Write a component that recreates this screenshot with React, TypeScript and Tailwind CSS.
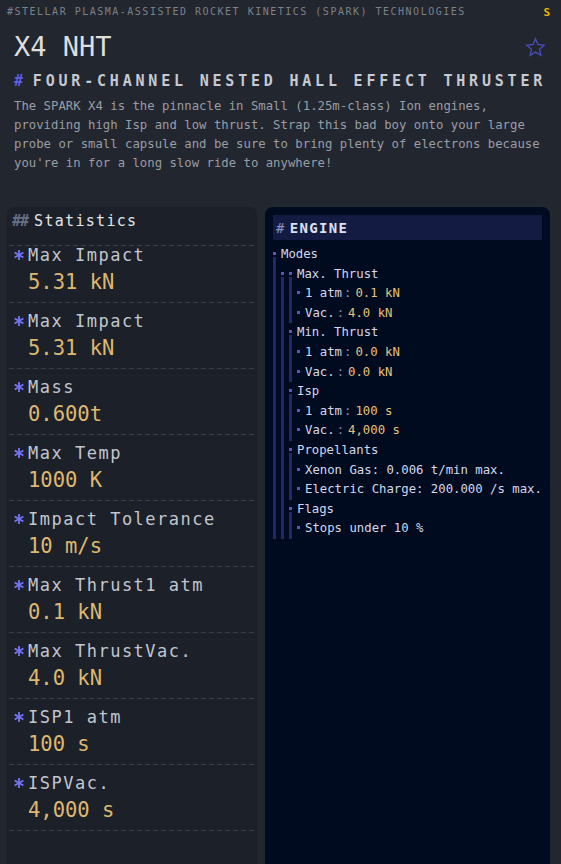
import React from 'react';

interface StatItem {
  label: string;
  value: string;
}

const stats: StatItem[] = [
  { label: 'Max Impact', value: '5.31 kN' },
  { label: 'Max Impact', value: '5.31 kN' },
  { label: 'Mass', value: '0.600t' },
  { label: 'Max Temp', value: '1000 K' },
  { label: 'Impact Tolerance', value: '10 m/s' },
  { label: 'Max Thrust1 atm', value: '0.1 kN' },
  { label: 'Max ThrustVac.', value: '4.0 kN' },
  { label: 'ISP1 atm', value: '100 s' },
  { label: 'ISPVac.', value: '4,000 s' },
];

const Dashes = () => (
  <div className="mx-[2px] h-px bg-[linear-gradient(to_right,#3a3f4a_5px,transparent_5px)] bg-[length:8px_1px]" />
);

const Asterisk = () => (
  <svg width="10" height="10" viewBox="0 0 10 10" className="shrink-0">
    <g stroke="#7373f3" strokeWidth="1.8" strokeLinecap="square">
      <line x1="5" y1="0.8" x2="5" y2="9.2" />
      <line x1="1.4" y1="2.9" x2="8.6" y2="7.1" />
      <line x1="1.4" y1="7.1" x2="8.6" y2="2.9" />
    </g>
  </svg>
);

const Star = () => (
  <svg width="21" height="21" viewBox="0 0 24 24" fill="none">
    <polygon
      points="12,2 14.9,8.6 22,9.3 16.6,14 18.2,21 12,17.3 5.8,21 7.4,14 2,9.3 9.1,8.6"
      stroke="#4b4bb6"
      strokeWidth="1.5"
      strokeLinejoin="miter"
    />
  </svg>
);

interface NodeProps {
  label?: React.ReactNode;
  children?: React.ReactNode;
}

// tree row: bullet + a line down the side of the children
const Node: React.FC<NodeProps> = ({ label, children }) => (
  <div className="flex">
    <div className="flex w-[8px] shrink-0 flex-col">
      <div className="mt-[7px] h-[3px] w-[3px] bg-[#5757c6]" />
      {children && <div className="mt-[2px] w-[3px] flex-1 bg-[#23286a]" />}
    </div>
    <div className="min-w-0 flex-1">
      {label && <div className="whitespace-nowrap leading-[19.6px]">{label}</div>}
      {children}
    </div>
  </div>
);

const Field = ({ k, v }: { k: string; v: string }) => (
  <Node
    label={
      <>
        <span>{k}</span>
        <span className="ml-[2px] mr-[4px] text-[#8a8fb4]">:</span>
        <span className="text-[#e6c27b]">{v}</span>
      </>
    }
  />
);

export default function App() {
  return (
    <div className="flex min-h-screen flex-col bg-[#22262e] font-['DejaVu_Sans_Mono',monospace]">
      <div className="flex h-[19px] items-start justify-between pl-[7px] pr-[11px] pt-[5px]">
        <div className="whitespace-nowrap text-[10px] leading-[14px] tracking-[1.5px] text-[#7d8189]">
          #STELLAR PLASMA-ASSISTED ROCKET KINETICS (SPARK) TECHNOLOGIES
        </div>
        <span className="mt-[2px] text-[11px] font-bold leading-[12px] text-[#f5b301]">S</span>
      </div>

      <div className="pl-[14px] pr-[15px]">
        <div className="mt-[12px] flex items-center justify-between">
          <h1 className="text-[27px] leading-[32px] text-[#dedede]">X4 NHT</h1>
          <Star />
        </div>
        <h2 className="mt-[8px] whitespace-nowrap text-[15px] font-bold leading-[20px] tracking-[3.8px] text-[#c6c9d2]">
          <span className="text-[#5d5de6]">#</span>
          <span className="ml-[6px]">FOUR-CHANNEL NESTED HALL EFFECT THRUSTER</span>
        </h2>
        <p className="mt-[6px] text-[12.3px] leading-[19px] text-[#999da6]">
          The SPARK X4 is the pinnacle in Small (1.25m-class) Ion engines, providing high Isp and
          low thrust. Strap this bad boy onto your large probe or small capsule and be sure to
          bring plenty of electrons because you're in for a long slow ride to anywhere!
        </p>
      </div>

      <div className="mt-[34px] flex flex-1 gap-[8px] pl-[7px] pr-[11px]">
        {/* Statistics */}
        <div className="w-[250px] shrink-0 rounded-t-[7px] bg-[#1c2028]">
          <div className="pl-[5px] pt-[4px] pb-[14px] text-[15px] leading-[20px] tracking-[1.3px]">
            <span className="font-bold tracking-[-1px] text-[#667086]">##</span>
            <span className="ml-[6px] text-[#e4e5e8]">Statistics</span>
          </div>
          <Dashes />
          {stats.map((item, i) => (
            <div key={i}>
              <div className={`flex pl-[7px] pb-[3px] ${i === 0 ? '-mt-[1px]' : 'pt-[8px]'}`}>
                <div className="flex h-[20px] items-center">
                  <Asterisk />
                </div>
                <div className="ml-[4px]">
                  <div className="text-[17px] leading-[20px] tracking-[1.5px] text-[#c2c6ce]">
                    {item.label}
                  </div>
                  <div className="text-[20.5px] leading-[34px] text-[#dfb86f]">{item.value}</div>
                </div>
              </div>
              <Dashes />
            </div>
          ))}
        </div>

        {/* Engine */}
        <div className="min-w-0 flex-1 rounded-t-[8px] bg-[#010b20] px-[8px] pt-[8px]">
          <div className="h-[25px] bg-[#141b42] pl-[3px] pt-[2px] text-[14px] font-bold leading-[23px] tracking-[1.3px]">
            <span className="font-normal text-[#8a90b8]">#</span>
            <span className="ml-[4px] text-[#dde0f0]">ENGINE</span>
          </div>
          <div className="mt-[5px] text-[12.3px] text-[#d4d8ec]">
            <Node label="Modes">
              <Node>
                <Node label="Max. Thrust">
                  <Field k="1 atm" v="0.1 kN" />
                  <Field k="Vac." v="4.0 kN" />
                </Node>
                <Node label="Min. Thrust">
                  <Field k="1 atm" v="0.0 kN" />
                  <Field k="Vac." v="0.0 kN" />
                </Node>
                <Node label="Isp">
                  <Field k="1 atm" v="100 s" />
                  <Field k="Vac." v="4,000 s" />
                </Node>
                <Node label="Propellants">
                  <Node label="Xenon Gas: 0.006 t/min max." />
                  <Node label="Electric Charge: 200.000 /s max." />
                </Node>
                <Node label="Flags">
                  <Node label="Stops under 10 %" />
                </Node>
              </Node>
            </Node>
          </div>
        </div>
      </div>
    </div>
  );
}
